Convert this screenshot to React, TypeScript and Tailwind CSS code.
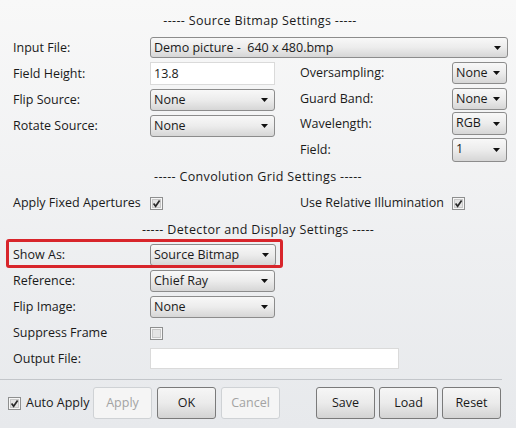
import React from "react";

const Arrow = () => (
  <svg className="absolute right-[6px] top-1/2 -translate-y-1/2" width="7" height="4" viewBox="0 0 7 4">
    <polygon points="0,0 7,0 3.5,4" fill="#111" />
  </svg>
);

const Sel = ({ className, text, top }: { className: string; text: string; top?: boolean }) => (
  <div
    className={`relative flex ${top ? "items-start pt-[1px]" : "items-center"} rounded-[3px] border border-[#8c8c8c] bg-gradient-to-b from-[#f8f8f8] via-[#ececec] to-[#d6d6d6] pl-[3px] ${className}`}
  >
    <span className="whitespace-pre leading-[18px]">{text}</span>
    <Arrow />
  </div>
);

const Inp = ({ className, text }: { className: string; text?: string }) => (
  <div className={`flex items-center border border-[#dadada] bg-white pl-[3px] ${className}`}>
    <span className="leading-[18px]">{text}</span>
  </div>
);

const Check = ({ checked }: { checked?: boolean }) => (
  <svg width="13" height="13" viewBox="0 0 13 13" className="shrink-0">
    <rect x="0.5" y="0.5" width="12" height="12" fill="#f6f6f6" stroke="#8e8f8f" />
    <rect x="2.5" y="2.5" width="8" height="8" fill="#e4e4e4" stroke="#c8c8c8" />
    {checked && <path d="M3.6 6.6 L5.6 9.2 L9.6 3.4" stroke="#2a2a2a" strokeWidth="1.7" fill="none" />}
  </svg>
);

const Btn = ({ text, disabled }: { text: string; disabled?: boolean }) =>
  disabled ? (
    <div className="flex h-[32px] w-[59px] items-center justify-center rounded-[3px] border border-[#cfd2d5] bg-[#f5f5f5] text-[#a3a3a3]">
      {text}
    </div>
  ) : (
    <div className="flex h-[32px] w-[59px] items-center justify-center rounded-[3px] border border-[#7a7a7a] bg-gradient-to-b from-[#f6f6f6] via-[#ebebeb] to-[#d3d3d3] text-[#1a1a1a]">
      {text}
    </div>
  );

const Label = ({ children, className }: { children: React.ReactNode; className?: string }) => (
  <div className={`leading-[18px] ${className ?? ""}`}>{children}</div>
);

export default function App() {
  return (
    <div className="relative h-[428px] w-[516px] overflow-hidden bg-gradient-to-b from-[#f8f8f8] to-[#e7e9ec] font-['Open_Sans',sans-serif] text-[12.5px] text-[#1a1a1a]">
      {/* Title */}
      <div className="pt-[13px] pl-[4px] text-center leading-[16px] tracking-[0.35px]">----- Source Bitmap Settings -----</div>

      {/* Input File */}
      <div className="mt-[8px] flex h-[21px] items-center pl-[13px]">
        <Label className="w-[137px]">Input File:</Label>
        <Sel className="h-[21px] w-[358px]" text="Demo picture -  640 x 480.bmp" />
      </div>

      {/* two columns */}
      <div className="mt-[4px] flex pl-[13px]">
        <div className="flex w-[287px] flex-col">
          <div className="flex h-[23px] items-center">
            <Label className="w-[137px]">Field Height:</Label>
            <Inp className="h-[23px] w-[125px]" text="13.8" />
          </div>
          <div className="mt-[4px] flex h-[22px] items-center">
            <Label className="w-[137px]">Flip Source:</Label>
            <Sel className="h-[22px] w-[125px]" text="None" />
          </div>
          <div className="mt-[4px] flex h-[22px] items-center">
            <Label className="w-[137px]">Rotate Source:</Label>
            <Sel className="h-[22px] w-[125px]" text="None" />
          </div>
        </div>
        <div className="flex flex-col">
          <div className="flex h-[22px] items-center">
            <Label className="w-[152px]">Oversampling:</Label>
            <Sel className="h-[22px] w-[55px]" text="None" />
          </div>
          <div className="mt-[4px] flex h-[22px] items-center">
            <Label className="w-[152px]">Guard Band:</Label>
            <Sel className="h-[22px] w-[55px]" text="None" />
          </div>
          <div className="mt-[2px] flex h-[23px] items-center">
            <Label className="w-[152px]">Wavelength:</Label>
            <Sel className="h-[23px] w-[55px]" text="RGB" top />
          </div>
          <div className="mt-[3px] flex h-[24px] items-center">
            <Label className="w-[152px]">Field:</Label>
            <Sel className="h-[24px] w-[55px]" text="1" top />
          </div>
        </div>
      </div>

      <div className="mt-[7px] text-center leading-[16px] tracking-[0.35px]">----- Convolution Grid Settings -----</div>

      <div className="mt-[8px] flex h-[20px] items-center pl-[13px]">
        <div className="flex w-[287px] items-center">
          <Label className="w-[137px]">Apply Fixed Apertures</Label>
          <Check checked />
        </div>
        <Label className="w-[152px]">Use Relative Illumination</Label>
        <Check checked />
      </div>

      <div className="mt-[9px] text-center leading-[16px] tracking-[0.35px]">----- Detector and Display Settings -----</div>

      <div className="mt-[6px] flex h-[22px] items-center pl-[13px]">
        <Label className="w-[137px]">Show As:</Label>
        <Sel className="h-[22px] w-[126px]" text="Source Bitmap" />
      </div>
      <div className="mt-[4px] flex h-[22px] items-center pl-[13px]">
        <Label className="w-[137px]">Reference:</Label>
        <Sel className="h-[22px] w-[125px]" text="Chief Ray" />
      </div>
      <div className="mt-[4px] flex h-[22px] items-center pl-[13px]">
        <Label className="w-[137px]">Flip Image:</Label>
        <Sel className="h-[22px] w-[125px]" text="None" />
      </div>
      <div className="mt-[5px] flex h-[20px] items-center pl-[13px]">
        <Label className="w-[137px]">Suppress Frame</Label>
        <Check />
      </div>
      <div className="mt-[5px] flex h-[21px] items-center pl-[13px]">
        <Label className="w-[137px]">Output File:</Label>
        <Inp className="h-[21px] w-[249px]" />
      </div>

      <div className="mt-[10px] h-[1px] w-[502px] bg-[#c3c6ca]" />

      <div className="mt-[7px] flex h-[32px] items-center pl-[8px]">
        <div className="flex w-[85px] items-center">
          <Check checked />
          <span className="ml-[5px] leading-[18px]">Auto Apply</span>
        </div>
        <div className="flex gap-[5px]">
          <Btn text="Apply" disabled />
          <Btn text="OK" />
          <Btn text="Cancel" disabled />
        </div>
        <div className="ml-[36px] flex gap-[4px]">
          <Btn text="Save" />
          <Btn text="Load" />
          <Btn text="Reset" />
        </div>
      </div>

      {/* red annotation box */}
      <div className="absolute left-[6px] top-[239px] h-[29px] w-[277px] rounded-[3px] border-[3px] border-[#d8252b]" />
    </div>
  );
}
